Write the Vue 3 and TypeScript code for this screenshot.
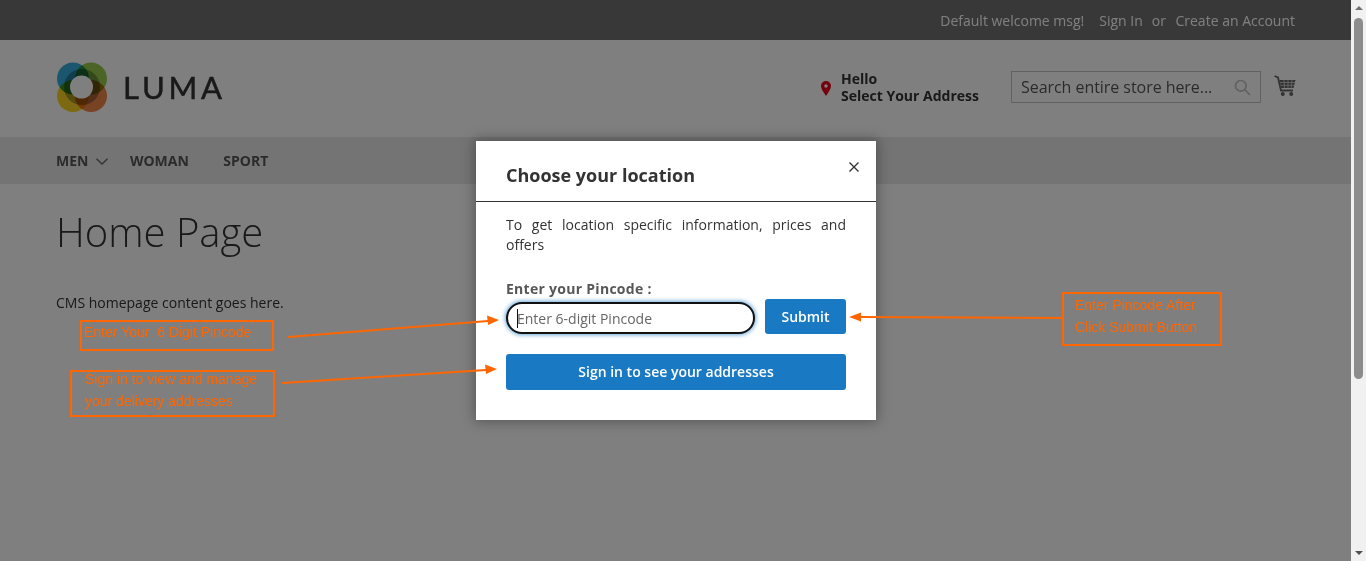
<script setup lang="ts">
const navItems: string[] = ['WOMAN', 'SPORT']
</script>

<template>
  <div class="viewport">
    <div class="page">
      <div class="topbar">
        <span class="welcome">Default welcome msg!</span>
        <a class="toplink">Sign In</a>
        <span class="or">or</span>
        <a class="toplink">Create an Account</a>
      </div>
      <header class="header">
        <div class="logo">
          <svg class="logomark" width="52" height="52" viewBox="0 0 52 52">
            <g class="petals">
              <circle cx="17" cy="17.500" r="16" fill="#25a5dc" />
              <circle cx="35" cy="17.500" r="16" fill="#8fc63c" />
              <circle cx="17" cy="35" r="16" fill="#f8d010" />
              <circle cx="35" cy="35" r="16" fill="#f07a3a" />
              <circle cx="26" cy="26" r="18" fill="#a8b0b0" />
            </g>
            <circle cx="25.500" cy="26" r="11.500" fill="#fff" />
          </svg>
          <span class="logotext">LUMA</span>
        </div>
        <div class="address">
          <svg class="pin" width="10" height="15" viewBox="0 0 10 15">
            <path fill-rule="evenodd" fill="#e8001c" d="M5 0a5 5 0 0 1 5 5c0 3.400-3 6.800-5 10C3 11.800 0 8.400 0 5a5 5 0 0 1 5-5Zm0 3.200a1.800 1.800 0 1 0 0 3.600 1.800 1.800 0 0 0 0-3.600Z" />
          </svg>
          <div class="addresstext">
            <div>Hello</div>
            <div>Select Your Address</div>
          </div>
        </div>
        <div class="search">
          <span class="searchtext">Search entire store here...</span>
          <svg width="17" height="17" viewBox="0 0 17 17" fill="none" stroke="#c2c2c2" stroke-width="1.700">
            <circle cx="6.800" cy="6.800" r="5.300" />
            <path d="M10.700 10.700 16 16" />
          </svg>
        </div>
        <svg class="cart" width="22" height="22" viewBox="0 0 22 22">
          <path fill="none" stroke="#666" stroke-width="1.800" d="M0.500 1 4 2.500 7 15.500H19" />
          <path fill="#666" d="M5.500 5H21.500L19.500 13H7.200Z" />
          <path fill="none" stroke="#d8d8d8" stroke-width="0.800" d="M6 7.500H21M6.500 10.300H20.300M10 5 10.600 13M14 5V13M18 5 17.200 13" />
          <circle cx="8.800" cy="19" r="2" fill="#666" />
          <circle cx="17.200" cy="19" r="2" fill="#666" />
        </svg>
      </header>
      <nav class="nav">
        <span class="navitem men">MEN</span>
        <svg class="chevron" width="12" height="7" viewBox="0 0 12 7" fill="none" stroke="#666" stroke-width="1.300">
          <path d="M0.500 0.800 6 6 11.500 0.800" />
        </svg>
        <span v-for="item in navItems" :key="item" class="navitem">{{ item }}</span>
      </nav>
      <main class="main">
        <h1 class="title">Home Page</h1>
        <p class="cms">CMS homepage content goes here.</p>
      </main>

      <div class="overlay"></div>

      <section class="modal">
        <div class="modalhead">
          <h2 class="modaltitle">Choose your location</h2>
          <svg class="close" width="10" height="10" viewBox="0 0 10 10" stroke="#333" stroke-width="1.400">
            <path d="M0.500 0.500 9.500 9.500M9.500 0.500 0.500 9.500" />
          </svg>
        </div>
        <div class="modalbody">
          <p class="intro">To get location specific information, prices and offers</p>
          <label class="pinlabel">Enter your Pincode :</label>
          <div class="pinrow">
            <div class="pinfield">
              <span class="caret"></span>
              <input class="pininput" type="text" placeholder="Enter 6-digit Pincode" />
            </div>
            <button class="btn submit" type="button">Submit</button>
          </div>
          <button class="btn signin" type="button">Sign in to see your addresses</button>
        </div>
      </section>

      <svg class="arrows" width="1351" height="561" viewBox="0 0 1351 561" fill="none" stroke="#ff6600" stroke-width="2">
        <path d="M288 337 488 321" />
        <path d="M499 320 487 315.500 488 325Z" fill="#ff6600" stroke="none" />
        <path d="M282 383 486 370" />
        <path d="M497 369 485 364.500 486 374Z" fill="#ff6600" stroke="none" />
        <path d="M1062 318 860 317" />
        <path d="M849 317 861 312.500V321.500Z" fill="#ff6600" stroke="none" />
      </svg>
      <div class="note note1"><div class="notetext">Enter Your&nbsp; 6 Digit Pincode</div></div>
      <div class="note note2"><div class="notetext">Sign in to view and manage<br />your delivery addresses</div></div>
      <div class="note note3"><div class="notetext">Enter Pincode After<br />Click Submit Button</div></div>
    </div>
    <div class="scrollbar">
      <span class="sb-up"></span>
      <span class="sb-thumb"></span>
      <span class="sb-spacer"></span>
      <span class="sb-down"></span>
    </div>
  </div>
</template>

<style>
html, body { margin: 0; height: 100%; overflow: hidden; }
</style>

<style scoped>
.viewport { display: flex; width: 1366px; height: 561px; overflow: hidden; font-family: "Open Sans", sans-serif; color: #333; }
.page { position: relative; width: 1351px; height: 561px; background: #fff; overflow: hidden; }

.topbar { display: flex; align-items: center; justify-content: flex-end; height: 40px; padding-right: 56px; background: #6e716e; color: #fff; font-size: 14px; box-sizing: border-box; }
.welcome { margin-right: 15px; }
.or { margin: 0 9.500px 0 9px; }

.header { display: flex; align-items: flex-start; height: 97px; padding: 0 55px 0 56px; box-sizing: border-box; }
.logo { display: flex; align-items: center; padding-top: 21px; }
.logomark { display: block; }
.petals circle { mix-blend-mode: multiply; opacity: .92; }
.logotext { margin-left: 15px; font-family: Lato, sans-serif; font-size: 31px; font-weight: 400; letter-spacing: 3.800px; -webkit-text-stroke: .5px #333; color: #333; line-height: 50px; }
.address { display: flex; align-items: center; margin-left: auto; padding-top: 30px; }
.pin { margin-top: 2px; }
.addresstext { margin-left: 10px; font-size: 14px; font-weight: 700; line-height: 17px; }
.search { display: flex; align-items: center; justify-content: space-between; width: 250px; height: 32px; margin: 31px 0 0 32px; padding: 0 9px; border: 1px solid #c2c2c2; box-sizing: border-box; background: #fff; }
.searchtext { font-size: 16px; letter-spacing: -.05px; color: #575757; white-space: nowrap; }
.cart { margin: 35px 0 0 13px; }

.nav { display: flex; align-items: center; height: 47px; padding-left: 56px; background: #e8e8e8; }
.navitem { font-size: 14px; font-weight: 700; color: #575757; margin-right: 34.500px; }
.men { margin-right: 8px; }
.chevron { margin: 2px 21.500px 0 0; }

.main { padding: 0 56px; }
.title { margin: 21px 0 0; font-size: 40px; font-weight: 300; line-height: 54px; color: #333; }
.cms { margin: 34px 0 0; font-size: 14px; line-height: 20px; color: #333; }

.overlay { position: absolute; inset: 0; background: rgba(0, 0, 0, .5); }

.modal { position: absolute; left: 476px; top: 141px; width: 400px; height: 279px; background: #fff; box-shadow: 0 0 12px 2px rgba(0, 0, 0, .3); box-sizing: border-box; }
.modalhead { position: relative; display: flex; align-items: center; height: 61px; padding: 7px 30px 0; box-sizing: border-box; border-bottom: 1px solid #333; }
.modaltitle { margin: 0; font-size: 18px; font-weight: 700; color: #333; }
.close { position: absolute; left: 373px; top: 21px; }
.modalbody { display: flex; flex-direction: column; padding: 13px 30px 0; }
.intro { margin: 0; font-size: 14px; line-height: 20px; text-align: justify; color: #333; }
.pinlabel { margin-top: 24px; font-size: 14px; font-weight: 700; line-height: 20px; letter-spacing: .28px; color: #575757; }
.pinrow { display: flex; align-items: flex-start; justify-content: space-between; margin-top: 0; }
.pinfield { position: relative; width: 249px; height: 32px; margin-top: 3px; }
.pininput { display: block; width: 100%; height: 100%; padding: 0 9px; box-sizing: border-box; border: 2px solid #111; border-radius: 16px; box-shadow: 0 0 4px 1px #68a8d8; outline: none; background: #fff; font: 14px "Open Sans", sans-serif; caret-color: transparent; }
.pininput::placeholder { color: #666; opacity: 1; }
.caret { position: absolute; left: 11px; top: 7px; width: 1px; height: 19px; background: #111; z-index: 1; }
.btn { border: 0; border-radius: 3px; background: #1979c3; color: #fff; font: 600 14px "Open Sans", sans-serif; padding: 0; }
.submit { width: 81px; height: 35px; margin-top: 0; }
.signin { width: 340px; height: 36px; margin-top: 20px; padding-bottom: 2px; }

.arrows { position: absolute; left: 0; top: 0; }
.note { position: absolute; box-sizing: border-box; border: 2px solid #ff6600; font: 14px/22px "Liberation Sans", sans-serif; color: #ff6600; white-space: nowrap; }
.note1 { left: 80px; top: 320px; width: 194px; height: 31px; padding-left: 2px; }
.note1 .notetext { margin-top: -1px; }
.note2 { left: 70px; top: 370px; width: 205px; height: 47px; padding-left: 13px; }
.note2 .notetext { margin-top: -4px; }
.note3 { left: 1062px; top: 292px; width: 160px; height: 54px; padding-left: 11px; }

.scrollbar { display: flex; flex-direction: column; align-items: center; width: 15px; height: 561px; background: #f1f1f1; }
.sb-up { width: 0; height: 0; margin-top: 6px; border-left: 4px solid transparent; border-right: 4px solid transparent; border-bottom: 4px solid #707070; }
.sb-thumb { width: 9px; height: 361px; margin-top: 8px; border-radius: 5px; background: #8c8c8c; }
.sb-spacer { flex: 1; }
.sb-down { width: 0; height: 0; margin-bottom: 6px; border-left: 4px solid transparent; border-right: 4px solid transparent; border-top: 4px solid #505050; }
</style>
